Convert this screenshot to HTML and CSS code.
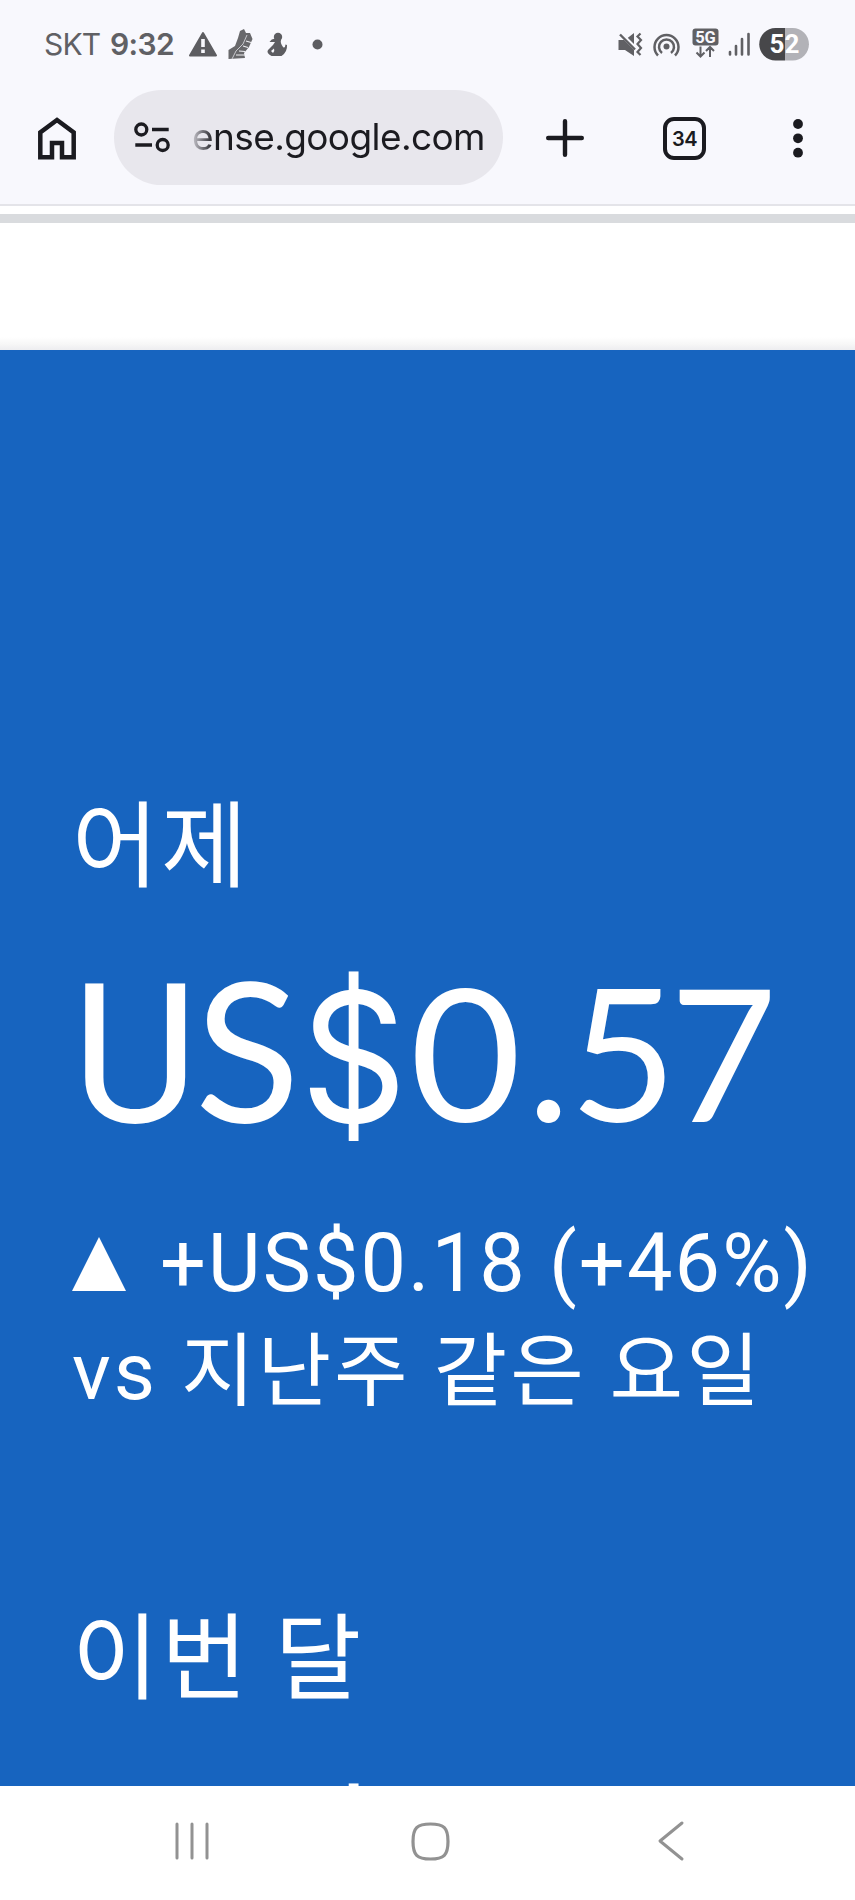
FILE: index.html
```html
<!DOCTYPE html>
<html lang="ko">
<head>
  <meta charset="UTF-8" />
  <meta name="viewport" content="width=device-width, initial-scale=1.0" />
  <title>AdSense</title>
  <link rel="stylesheet" href="styles.css">
</head>
<body>
  <div class="status-bar">
    <span class="carrier">SKT</span>
    <span class="clock">9:32</span>
    <svg class="notif" width="130" height="34" viewBox="188 28 130 34">
      <path d="M203 33 L216 55.500 H190 Z" fill="#5d5d61" stroke="#5d5d61" stroke-width="2" stroke-linejoin="round"/>
      <path d="M203 39 V47 M203 49.500 V53" stroke="#f8f8fd" stroke-width="3.600"/>
      <!-- running shoe -->
      <path d="M228.500 59 L228.500 50 L235 46 L238 38 L240 31 L244 29 L246 33 L250 33 L252.500 39 L249 47 L244 53 L245 58 Z" fill="#68686b"/>
      <path d="M247 35 L243 44 L236 51 L232 59" fill="none" stroke="#c9c9ce" stroke-width="1"/>
      <path d="M246 41 L251 42.500 M243 46 L248 47.500 M239 51 L245 51.500 M236 55 L245 55" stroke="#f0f0f4" stroke-width="1.100"/>
      <!-- figure -->
      <circle cx="278" cy="37" r="4.200" fill="#5d5d61"/>
      <path d="M269.500 42 Q272 38 276 39 L281 40 Q280 43 283 47 Q285 49 285.500 44.500 L287 45 Q287.500 52 281.500 56 H271.500 Q266 53 268 50 L273 45 L275 42 Z" fill="#5d5d61"/>
      <path d="M271 51 L274 48.500 Q275 51 273 53 Z" fill="#f8f8fd"/>
      <circle cx="317.500" cy="44.500" r="5" fill="#5d5d61"/>
    </svg>
    <svg class="system" width="192" height="34" viewBox="618 28 192 34">
      <!-- muted, vibrate -->
      <path d="M618.500 40 H625 L634 33 V56 L625 50 H618.500 Z" fill="#606064"/>
      <path d="M619 32 L636 49" stroke="#f8f8fd" stroke-width="4"/>
      <path d="M620 34.500 L635 49.500" stroke="#606064" stroke-width="2.400"/>
      <path d="M640.500 33.500 L637.500 36.500 L641 40 L637.500 44 L641 48 L637.500 52 L640.500 55" fill="none" stroke="#606064" stroke-width="2.200"/>
      <!-- hotspot -->
      <circle cx="666.500" cy="46.500" r="3" fill="#606064"/>
      <path d="M662 53 A7.500 7.500 0 1 1 671 53" fill="none" stroke="#606064" stroke-width="2.500"/>
      <path d="M658 55.500 A12 12 0 1 1 675 55.500" fill="none" stroke="#606064" stroke-width="2.500"/>
      <!-- 5G with arrows -->
      <rect x="692.500" y="28.500" width="26" height="17" rx="3" fill="#606064"/>
      <text class="net-label" x="705.500" y="43" text-anchor="middle">5G</text>
      <path d="M700.500 46.500 V56 M696.500 52.500 L700.500 56.500 L704.500 52.500 M710 57 V47.500 M706 51 L710 47 L714 51" fill="none" stroke="#606064" stroke-width="2"/>
      <!-- signal -->
      <path d="M730 52 V54.500 M736 46 V54.500 M742 39 V54.500 M748.500 34 V54.500" stroke="#606064" stroke-width="2.600" stroke-linecap="round"/>
      <!-- battery -->
      <path d="M785 28 H775.500 A16.250 16.250 0 0 0 775.500 60.500 H785 Z" fill="#47474a"/>
      <path d="M785 28 H792.700 A16.250 16.250 0 0 1 792.700 60.500 H785 Z" fill="#b2b2b7"/>
      <text class="battery-label" x="784.500" y="53" text-anchor="middle">52</text>
    </svg>
  </div>

  <div class="toolbar">
    <svg class="home" width="38" height="43" viewBox="0 0 38 43">
      <path d="M2.300 40.300 V15.500 L19 3 L35.700 15.500 V40.300 H24 V26 H14 V40.300 Z" fill="none" stroke="#1b1b20" stroke-width="4.500"/>
    </svg>
    <div class="address">
      <svg class="tune" width="36" height="31" viewBox="0 0 36 31">
        <g fill="none" stroke="#1b1b20" stroke-width="3.300">
          <circle cx="7.300" cy="7.500" r="5.500"/>
          <circle cx="28.700" cy="23" r="5.500"/>
          <path d="M18 7.500 H34.700 M1.300 23 H18"/>
        </g>
      </svg>
      <span class="url">ense.google.com</span>
    </div>
    <svg class="plus" width="38" height="38" viewBox="0 0 38 38">
      <path d="M19 2.200 V35.800 M2.200 19 H35.800" stroke="#1b1b20" stroke-width="4.400" stroke-linecap="round"/>
    </svg>
    <div class="tabs">34</div>
    <svg class="more" width="10" height="39" viewBox="0 0 10 39">
      <g fill="#1b1b20">
        <circle cx="5" cy="5" r="4.900"/>
        <circle cx="5" cy="19.300" r="4.900"/>
        <circle cx="5" cy="33.700" r="4.900"/>
      </g>
    </svg>
  </div>

  <div class="page-header"></div>

  <div class="earnings">
    <div class="card">
      <div class="label">어제</div>
      <div class="amount"><span class="u">U</span><span class="s">S</span><span class="dollar">$</span><span class="zero">0</span><span class="point">.</span><span class="tenths">5</span><span>7</span></div>
      <div class="delta">
        <svg class="up" width="54" height="54" viewBox="0 0 54 54"><path d="M27 0 L54 54 H0 Z" fill="#fff"/></svg>
        <span>+US$0.18 (+46%)</span>
      </div>
      <div class="compare">vs 지난주 같은 요일</div>
    </div>
    <div class="card">
      <div class="label">이번 달</div>
      <div class="amount"><span class="u">U</span><span class="s">S</span><span class="dollar">$</span></div>
    </div>
  </div>

  <div class="nav-bar">
    <svg class="recents" width="34" height="38" viewBox="0 0 34 38">
      <path d="M2 2 V36 M17 2 V36 M32 2 V36" stroke="#929292" stroke-width="3" stroke-linecap="round"/>
    </svg>
    <svg class="home-key" width="39" height="39" viewBox="0 0 39 39">
      <path d="M19.500 2 C33 2 37 6 37 19.500 C37 33 33 37 19.500 37 C6 37 2 33 2 19.500 C2 6 6 2 19.500 2 Z" fill="none" stroke="#929292" stroke-width="3.200"/>
    </svg>
    <svg class="back" width="26" height="40" viewBox="0 0 26 40">
      <path d="M24 2 L2 20 L24 38" fill="none" stroke="#929292" stroke-width="3" stroke-linecap="round" stroke-linejoin="round"/>
    </svg>
  </div>
</body>
</html>
```
FILE: styles.css
```css
* {
  box-sizing: border-box;
}
body {
  margin: 0;
  width: 855px;
  height: 1900px;
  overflow: hidden;
  display: flex;
  flex-direction: column;
  background: #fff;
  font-family: Roboto, "Noto Sans CJK KR", sans-serif;
}
svg {
  display: block;
  flex: none;
  overflow: visible;
}
.status-bar {
  display: flex;
  height: 90px;
  padding: 28px 45px 0 44px;
  background: #f8f8fd;
  color: #606064;
  font-family: Inter, sans-serif;
  font-size: 30px;
  line-height: 33px;
}
.carrier {
  width: 66px;
  letter-spacing: -0.8px;
}
.clock {
  width: 78px;
  font-weight: 600;
  letter-spacing: -0.6px;
}
.system {
  margin-left: auto;
}
.net-label {
  font: 700 16.5px Roboto, sans-serif;
  fill: #f8f8fd;
}
.battery-label {
  font: 700 26px Roboto, sans-serif;
  fill: #fff;
}
.toolbar {
  display: flex;
  align-items: center;
  height: 116px;
  padding: 0 52px 18px 38px;
  border-bottom: 2px solid #e4e4e9;
  background: #f8f8fd;
}
.address {
  display: flex;
  align-items: center;
  width: 389px;
  height: 95px;
  margin: 0 0 2px 38px;
  padding-left: 20px;
  border-radius: 48px;
  background: #e8e7ed;
}
.url {
  margin-left: 22px;
  font-family: Inter, sans-serif;
  font-size: 37px;
  line-height: 48px;
  letter-spacing: -0.6px;
  white-space: nowrap;
  color: transparent;
  background: linear-gradient(to right, #c8c7ce 0, #1b1b20 22px);
  background-clip: text;
  -webkit-background-clip: text;
}
.plus {
  margin-left: 43px;
}
.tabs {
  width: 43px;
  height: 43px;
  margin-left: 79px;
  border: 4.5px solid #1b1b20;
  border-radius: 11px;
  color: #1b1b20;
  font: 600 20px/36px Inter, sans-serif;
  letter-spacing: -0.5px;
  text-align: center;
}
.more {
  margin-left: auto;
}
.page-header {
  height: 144px;
  padding-top: 8px;
  background: linear-gradient(to bottom, #fff 131px, #f7f7f7 138px, #ededf0 144px);
}
.page-header::before {
  content: "";
  display: block;
  height: 9px;
  background: #d9dbde;
}
.earnings {
  height: 1436px;
  padding: 425px 0 0 72px;
  overflow: hidden;
  background: #1764bf;
  color: #fff;
}
.card {
  height: 812px;
}
.label {
  height: 128px;
  font-family: "Noto Sans CJK KR", sans-serif;
  font-size: 94px;
  line-height: 128px;
  letter-spacing: 2.5px;
  word-spacing: -4px;
}
.amount {
  height: 305px;
  font-family: Lato, sans-serif;
  font-size: 185px;
  line-height: 294px;
  white-space: nowrap;
}
/* line-height 0 keeps the mixed faces from stretching the line */
.amount span {
  line-height: 0;
}
.u {
  font-family: Roboto, sans-serif;
  font-size: 194px;
}
.s {
  margin-left: -3px;
  font-size: 194px;
}
.dollar {
  display: inline-block;
  margin-left: -4px;
  font-family: Inter, sans-serif;
  font-size: 180px;
  transform: scaleX(0.92);
}
.zero {
  display: inline-block;
  transform: scaleX(1.04);
}
.point {
  margin-left: 8px;
}
.tenths {
  margin: 0 -7px 0 -1px;
}
.delta {
  display: flex;
  align-items: center;
  height: 112px;
  font-size: 81px;
  line-height: 110px;
  letter-spacing: 2.1px;
  white-space: nowrap;
}
.up {
  margin-right: 34px;
}
.compare {
  height: 104px;
  font-size: 80px;
  line-height: 104px;
  letter-spacing: 3px;
  white-space: nowrap;
}
.nav-bar {
  display: flex;
  align-items: center;
  height: 114px;
  padding: 0 171px 4px 175px;
  background: #fff;
}
.home-key {
  margin-left: 202px;
}
.back {
  margin-left: auto;
}
```
